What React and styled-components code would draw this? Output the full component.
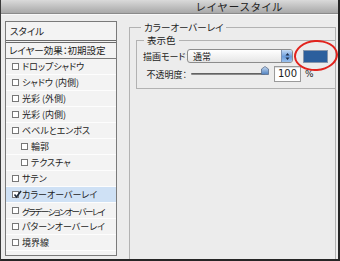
import React from 'react';
import styled, { createGlobalStyle } from 'styled-components';

const Global = createGlobalStyle`
  html, body {
    margin: 0;
    padding: 0;
    background: #2b2b2b;
  }
  body {
    font-family: "Noto Sans CJK JP", "Noto Sans", sans-serif;
    font-feature-settings: "palt";
    color: #1c1c1c;
  }
`;

const effects = [
  { label: 'ドロップシャドウ' },
  { label: 'シャドウ (内側)' },
  { label: '光彩 (外側)' },
  { label: '光彩 (内側)' },
  { label: 'ベベルとエンボス' },
  { label: '輪郭', sub: true },
  { label: 'テクスチャ', sub: true },
  { label: 'サテン' },
  { label: 'カラーオーバーレイ', checked: true },
  { label: 'グラデーションオーバーレイ', tight: true },
  { label: 'パターンオーバーレイ' },
  { label: '境界線' },
];

const App = () => {
  return (
    <>
      <Global />
      <Window>
        <TitleBar>
          <TitleText>レイヤースタイル</TitleText>
        </TitleBar>
        <Body>
          <StylePanel>
            <PanelHeader>スタイル</PanelHeader>
            <PresetRow>レイヤー効果：初期設定</PresetRow>
            {effects.map((e) => (
              <EffectRow key={e.label} $sub={e.sub} $active={e.checked}>
                <Check>
                  {e.checked && (
                    <svg width="9" height="9" viewBox="0 0 9 9">
                      <path d="M1.5 4.5 L3.5 7 L8 1" fill="none" stroke="#1d2a3a" strokeWidth="1.6" />
                    </svg>
                  )}
                </Check>
                <EffectName $tight={e.tight}>{e.label}</EffectName>
              </EffectRow>
            ))}
          </StylePanel>

          <Group>
            <Legend>カラーオーバーレイ</Legend>
            <InnerGroup>
              <InnerLegend>表示色</InnerLegend>
              <FieldRow>
                <Label>描画モード：</Label>
                <Select>
                  <SelectText>通常</SelectText>
                  <SelectArrows>
                    <svg width="5" height="9" viewBox="0 0 5 9">
                      <path d="M0.5 3.5 L2.5 1 L4.5 3.5 Z M0.5 5.5 L2.5 8 L4.5 5.5 Z" fill="#1a2c4a" />
                    </svg>
                  </SelectArrows>
                </Select>
                <SwatchWrap>
                  <Swatch />
                  <Circle />
                </SwatchWrap>
              </FieldRow>
              <FieldRow>
                <Label>不透明度：</Label>
                <Slider>
                  <Track />
                  <Thumb>
                    <svg width="8" height="9" viewBox="0 0 8 9">
                      <defs>
                        <linearGradient id="tg" x1="0" y1="0" x2="0" y2="1">
                          <stop offset="0" stopColor="#c9dcf2" />
                          <stop offset="1" stopColor="#4d7fbf" />
                        </linearGradient>
                      </defs>
                      <path d="M4 0.5 L7.5 3 L7.5 8.5 L0.5 8.5 L0.5 3 Z" fill="url(#tg)" stroke="#5a6f8c" strokeWidth="0.8" />
                    </svg>
                  </Thumb>
                </Slider>
                <NumberBox>100</NumberBox>
                <Unit>%</Unit>
              </FieldRow>
            </InnerGroup>
          </Group>
        </Body>
      </Window>
    </>
  );
};

const Window = styled.div`
  width: 340px;
  height: 261px;
  box-sizing: border-box;
  border-left: 1px solid #3a3a3a;
  border-right: 2px solid #262626;
  border-bottom: 2px solid #262626;
  background: #ececec;
  display: flex;
  flex-direction: column;
  overflow: hidden;
`;

const TitleBar = styled.div`
  height: 13px;
  flex-shrink: 0;
  background: linear-gradient(#dadada, #a8a8a8);
  border-bottom: 1px solid #8a8a8a;
  display: flex;
  align-items: center;
  justify-content: center;
  padding-left: 141px;
`;

const TitleText = styled.span`
  font-size: 10.5px;
  letter-spacing: 1.5px;
  color: #202020;
  line-height: 12px;
  height: 12px;
`;

const Body = styled.div`
  flex: 1;
  min-height: 0;
  display: flex;
  gap: 12px;
  padding: 6px 0 3px 4px;
  border-top: 1px solid #f8f8f8;
`;

const StylePanel = styled.div`
  width: 112px;
  box-sizing: border-box;
  border: 1px solid #7a7a7a;
  background: #f3f3f3;
  display: flex;
  flex-direction: column;
  font-size: 9px;
  overflow: hidden;
`;

const PanelHeader = styled.div`
  height: 18px;
  line-height: 18px;
  padding-left: 4px;
  border-bottom: 3px double #6a6a6a;
  font-size: 9.5px;
`;

const PresetRow = styled.div`
  height: 15px;
  line-height: 15px;
  padding-left: 3px;
  border-bottom: 1px solid #7a7a7a;
  font-size: 9.5px;
  white-space: nowrap;
`;

const EffectRow = styled.div`
  height: 15px;
  display: flex;
  align-items: center;
  gap: 2px;
  padding-left: ${(p) => (p.$sub ? '15px' : '6px')};
  border-bottom: 1px solid #fdfdfd;
  background: ${(p) => (p.$active ? '#cfe1f5' : 'transparent')};
  white-space: nowrap;
`;

const EffectName = styled.span`
  font-size: ${(p) => (p.$tight ? '8.5px' : '9px')};
  letter-spacing: ${(p) => (p.$tight ? '-1.4px' : '0')};
`;

const Check = styled.span`
  width: 7px;
  height: 7px;
  box-sizing: border-box;
  border: 1px solid #777;
  background: #fff;
  position: relative;
  flex-shrink: 0;
  margin-right: 1px;

  svg {
    position: absolute;
    left: 0;
    top: -2px;
  }
`;

const Group = styled.fieldset`
  flex: 1;
  margin: 0 2px -4px 0;
  padding: 0 0 0 6px;
  border: 1px solid #b2b2b2;
  border-bottom: none;
  min-width: 0;
`;

const Legend = styled.legend`
  margin-left: 5px;
  padding: 0 3px;
  font-size: 9.5px;
  line-height: 12px;
`;

const InnerGroup = styled.fieldset`
  margin: 1px 0 0 0;
  padding: 3px 0 7px 6px;
  border: 1px solid #b2b2b2;
  border-right: none;
  display: flex;
  flex-direction: column;
  gap: 4px;
`;

const InnerLegend = styled.legend`
  margin-left: 1px;
  padding: 0 3px;
  font-size: 9.5px;
  line-height: 12px;
`;

const FieldRow = styled.div`
  height: 14px;
  display: flex;
  align-items: center;
  font-size: 9px;
`;

const Label = styled.span`
  width: 44px;
  text-align: right;
  white-space: nowrap;
  flex-shrink: 0;
`;

const Select = styled.div`
  width: 106px;
  height: 14px;
  box-sizing: border-box;
  border: 1px solid #8c8c8c;
  border-radius: 3px;
  background: linear-gradient(#ffffff, #e6e6e6);
  display: flex;
  align-items: center;
  justify-content: space-between;
  overflow: hidden;
`;

const SelectText = styled.span`
  padding-left: 5px;
  font-size: 9px;
`;

const SelectArrows = styled.span`
  width: 10px;
  height: 100%;
  display: flex;
  align-items: center;
  justify-content: center;
  background: linear-gradient(#c5dbf5, #6a9ddc 55%, #9cc2ee);
  border-left: 1px solid #7d93b3;
`;

const SwatchWrap = styled.div`
  position: relative;
  margin-left: 10px;
`;

const Swatch = styled.div`
  width: 25px;
  height: 13px;
  box-sizing: border-box;
  border: 1px solid #8796ab;
  background: #2c5f9d;
`;

const Circle = styled.div`
  position: absolute;
  left: -9px;
  top: -10px;
  width: 44px;
  height: 31px;
  box-sizing: border-box;
  border: 2px solid #e2231d;
  border-radius: 50%;
  transform: rotate(-4deg);
`;

const Slider = styled.div`
  width: 78px;
  height: 12px;
  margin-left: 4px;
  position: relative;
  display: flex;
  align-items: center;
`;

const Track = styled.div`
  width: 74px;
  height: 2px;
  border-radius: 1px;
  background: linear-gradient(#4d4d4d, #a0a0a0);
`;

const Thumb = styled.span`
  position: absolute;
  left: 70px;
  top: -2px;
  line-height: 0;
`;

const NumberBox = styled.div`
  width: 27px;
  height: 16px;
  box-sizing: border-box;
  margin-left: 5px;
  padding-left: 3px;
  border: 1px solid #9a9a9a;
  box-shadow: inset 0 1px 1px rgba(0, 0, 0, 0.15);
  background: #fff;
  font-family: "DejaVu Sans", "Liberation Sans", sans-serif;
  font-size: 10px;
  line-height: 14px;
`;

const Unit = styled.span`
  margin-left: 4px;
  font-family: "DejaVu Sans", "Liberation Sans", sans-serif;
  font-size: 9px;
`;

export default App;
